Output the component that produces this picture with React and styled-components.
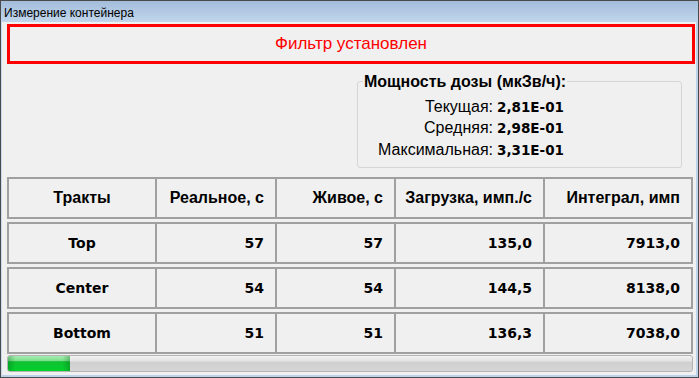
import React from "react";
import styled, { createGlobalStyle } from "styled-components";

const GlobalStyle = createGlobalStyle`
  html, body {
    margin: 0;
    padding: 0;
    background: #ffffff;
  }
  body {
    font-family: "Liberation Sans", Arial, sans-serif;
    color: #000;
  }
`;

const Window = styled.div`
  width: 699px;
  height: 378px;
  box-sizing: border-box;
  border: 1px solid #4a4a4a;
  display: flex;
  flex-direction: column;
  background: #f0f0f0;
`;

const TitleBar = styled.div`
  height: 21px;
  flex: none;
  box-sizing: border-box;
  padding: 5px 0 0 3px;
  background: linear-gradient(#a3bddb, #c1d6ec);
  font-size: 12px;
  line-height: 14px;
`;

const Body = styled.div`
  flex: 1;
  display: flex;
  flex-direction: column;
  padding: 2px 1px 0 5px;
  border-left: 1px solid #c6d9ed;
  border-right: 2px solid #bcd2ea;
  border-bottom: 2px solid #bcd2ea;
`;

const Banner = styled.div`
  height: 40px;
  box-sizing: border-box;
  border: 3px solid #ff0000;
  display: flex;
  align-items: center;
  justify-content: center;
  color: #ff0000;
  font-size: 17px;
`;

const DoseArea = styled.div`
  display: flex;
  justify-content: flex-end;
  margin-top: 9px;
  padding-right: 13px;
`;

const Group = styled.fieldset`
  margin: 0;
  width: 325px;
  box-sizing: border-box;
  border: 1px solid #d6d6d6;
  border-radius: 3px;
  padding: 6px 0 6px 0;
`;

const Legend = styled.legend`
  margin-left: 5px;
  padding: 0 1px;
  font-weight: bold;
  font-size: 16px;
  line-height: 17px;
`;

const DoseGrid = styled.div`
  display: grid;
  grid-template-columns: 135px auto;
  column-gap: 4px;
  grid-auto-rows: 21.5px;
  align-items: center;
`;

const DoseLabel = styled.span`
  text-align: right;
  font-size: 16px;
`;

const DoseValue = styled.span`
  font-family: "DejaVu Sans", Verdana, sans-serif;
  font-weight: bold;
  font-size: 13.5px;
`;

const Table = styled.div`
  margin: 9px 2px 0 0;
  display: flex;
  flex-direction: column;
  gap: 3px;
`;

const Row = styled.div`
  display: grid;
  grid-template-columns: 146px 120px 119px 149px 1fr;
  height: 42px;
  box-sizing: border-box;
  border: 2px solid #a0a0a0;
`;

const Cell = styled.div`
  box-sizing: border-box;
  display: flex;
  align-items: center;
  justify-content: ${(p) => (p.$center ? "center" : "flex-end")};
  padding-right: ${(p) => (p.$center ? 0 : 11)}px;
  font-weight: bold;
  font-family: ${(p) =>
    p.$head
      ? `"Liberation Sans", Arial, sans-serif`
      : `"DejaVu Sans", Verdana, sans-serif`};
  font-size: ${(p) => (p.$head ? 16 : 14)}px;

  & + & {
    border-left: 2px solid #a0a0a0;
  }
`;

const Progress = styled.div`
  margin: 1px 2px 0 0;
  height: 17px;
  box-sizing: border-box;
  border: 1px solid #b4b4b4;
  border-radius: 3px;
  overflow: hidden;
  background: linear-gradient(#f2f2f2 0%, #e2e2e2 35%, #cfcfcf 40%, #d6d6d6 100%);
`;

const Fill = styled.div`
  height: 100%;
  width: ${(p) => p.$value}%;
  background: linear-gradient(
      to right,
      rgba(0, 90, 20, 0.3),
      rgba(0, 0, 0, 0) 12%,
      rgba(0, 0, 0, 0) 88%,
      rgba(0, 90, 20, 0.3)
    ),
    linear-gradient(#a6ecae 0%, #7ee08e 30%, #12c032 38%, #00d22b 100%);
`;

const heads = ["Тракты", "Реальное, с", "Живое, с", "Загрузка, имп./с", "Интеграл, имп"];

const rows = [
  ["Top", "57", "57", "135,0", "7913,0"],
  ["Center", "54", "54", "144,5", "8138,0"],
  ["Bottom", "51", "51", "136,3", "7038,0"],
];

const dose = [
  ["Текущая:", "2,81E-01"],
  ["Средняя:", "2,98E-01"],
  ["Максимальная:", "3,31E-01"],
];

export default function App() {
  return (
    <>
      <GlobalStyle />
      <Window>
        <TitleBar>Измерение контейнера</TitleBar>
        <Body>
          <Banner>Фильтр установлен</Banner>
          <DoseArea>
            <Group>
              <Legend>Мощность дозы (мкЗв/ч):</Legend>
              <DoseGrid>
                {dose.map(([l, v]) => (
                  <React.Fragment key={l}>
                    <DoseLabel>{l}</DoseLabel>
                    <DoseValue>{v}</DoseValue>
                  </React.Fragment>
                ))}
              </DoseGrid>
            </Group>
          </DoseArea>
          <Table>
            <Row>
              {heads.map((h, i) => (
                <Cell key={h} $head $center={i === 0}>
                  {h}
                </Cell>
              ))}
            </Row>
            {rows.map((r) => (
              <Row key={r[0]}>
                {r.map((v, i) => (
                  <Cell key={i} $center={i === 0}>
                    {v}
                  </Cell>
                ))}
              </Row>
            ))}
          </Table>
          <Progress>
            <Fill $value={9} />
          </Progress>
        </Body>
      </Window>
    </>
  );
}
